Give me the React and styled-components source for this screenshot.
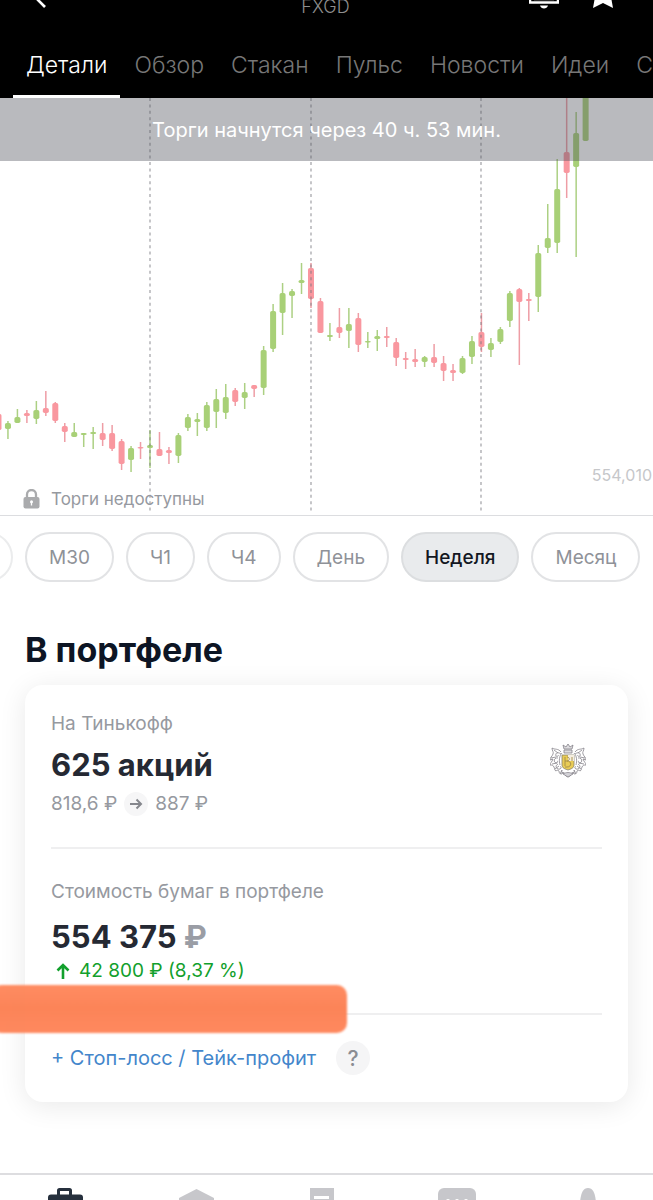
import React from "react";
import styled, { createGlobalStyle } from "styled-components";

const GlobalStyle = createGlobalStyle`
  * { box-sizing: border-box; }
  body {
    margin: 0;
    background: #fff;
    font-family: Inter, "Liberation Sans", sans-serif;
    color: #252933;
  }
  button { font: inherit; cursor: pointer; }
`;

const Page = styled.div`
  position: relative;
  display: flex;
  flex-direction: column;
  min-height: 100vh;
  overflow: hidden;
`;

const Header = styled.header`
  background: #000;
`;

const TitleBar = styled.div`
  display: grid;
  grid-template-columns: 1fr auto 1fr;
  height: 14px;
  padding: 0 38px 0 36px;
`;

const Title = styled.h1`
  margin: 0;
  font-size: 18px;
  font-weight: 300;
  line-height: 14px;
  color: #8e8e8e;
`;

const Actions = styled.div`
  display: flex;
  justify-content: flex-end;
  gap: 32px;
`;

const IconButton = styled.button`
  display: flex;
  justify-self: start;
  align-items: flex-start;
  padding: 0;
  border: 0;
  background: none;
`;

const Tabs = styled.nav`
  display: flex;
  gap: 1px;
  height: 84px;
  padding: 0 13px;
  overflow: hidden;
`;

const Tab = styled.a`
  flex: none;
  padding: 35px 13px 0;
  border-bottom: 3px solid ${(p) => (p.$active ? "#fff" : "transparent")};
  font-size: 23px;
  font-weight: 300;
  line-height: 32px;
  text-decoration: none;
  color: ${(p) => (p.$active ? "#fff" : "#777")};
`;

const ChartPanel = styled.section`
  position: relative;
  height: 418px;
  border-bottom: 1px solid #dcdde0;
`;

const ChartSvg = styled.svg`
  display: block;
  width: 100%;
  height: 417px;
`;

const Banner = styled.div`
  position: absolute;
  top: 0;
  left: 0;
  right: 0;
  padding: 17px 16px 15px;
  font-size: 20px;
  line-height: 31px;
  text-align: center;
  color: #fff;
  background: rgba(80, 82, 92, 0.4);
`;

const Unavailable = styled.div`
  position: absolute;
  left: 23px;
  bottom: 4px;
  display: flex;
  align-items: center;
  gap: 11px;
  font-size: 17px;
  line-height: 24px;
  color: #9699a0;
`;

const PriceLabel = styled.div`
  position: absolute;
  right: 1px;
  bottom: 28px;
  font-size: 16px;
  line-height: 24px;
  color: #c6c7ca;
`;

const Intervals = styled.div`
  display: flex;
  gap: 12px;
  padding: 16px 0 0;
  overflow: hidden;
`;

const Chip = styled.button`
  flex: none;
  height: 50px;
  padding: 0 22px;
  border: 2px solid ${(p) => (p.$active ? "#dcdee0" : "#e2e3e5")};
  border-radius: 25px;
  background: ${(p) => (p.$active ? "#e9ebed" : "#fff")};
  font-size: 19px;
  font-weight: ${(p) => (p.$active ? 500 : 400)};
  color: ${(p) => (p.$active ? "#131722" : "#8f9298")};
`;

const EdgeChip = styled(Chip)`
  width: 60px;
  margin-left: -47px;
  border-color: #ebeced;
`;

const Portfolio = styled.main`
  flex: 1;
  padding: 46px 25px 0;
`;

const SectionTitle = styled.h2`
  margin: 0 0 13px;
  font-size: 34px;
  font-weight: 700;
  line-height: 44px;
  color: #0d1524;
`;

const Card = styled.article`
  padding: 26px 26px 25px;
  border-radius: 18px;
  background: #fff;
  box-shadow: 0 4px 28px rgba(0, 0, 0, 0.09);
`;

const Holding = styled.div`
  display: flex;
  align-items: flex-start;
  justify-content: space-between;
  height: 138px;
  border-bottom: 2px solid #efeff0;
`;

const Worth = styled.div`
  height: 166px;
  padding-top: 30px;
  border-bottom: 2px solid #efeff0;
`;

const Caption = styled.div`
  font-size: 19px;
  line-height: 26px;
  color: #9699a0;
`;

const Amount = styled.div`
  margin-top: ${(p) => (p.$spaced ? "14px" : "10px")};
  font-size: 31px;
  font-weight: 700;
  line-height: 36px;
  span { color: #9a9da5; }
`;

const Prices = styled.div`
  display: flex;
  align-items: center;
  gap: 7px;
  margin-top: 9px;
  font-size: 19px;
  line-height: 24px;
  color: #9699a0;
`;

const Gain = styled.div`
  display: flex;
  align-items: center;
  gap: 9px;
  padding: 4px 0 0 5px;
  font-size: 19px;
  line-height: 24px;
  color: #12a02c;
`;

const CrestSlot = styled.div`
  padding: 33px 16px 0 0;
`;

const Orders = styled.div`
  display: flex;
  align-items: center;
  gap: 20px;
  height: 62px;
  padding-top: 24px;
`;

const OrderLink = styled.a`
  font-size: 20px;
  line-height: 28px;
  text-decoration: none;
  color: #4386cb;
`;

const HelpButton = styled.button`
  width: 34px;
  height: 34px;
  padding: 0;
  border: 0;
  border-radius: 50%;
  background: #f5f5f6;
  font-size: 21px;
  font-weight: 500;
  color: #8b8d93;
`;

const Marker = styled.div`
  position: absolute;
  top: 985px;
  left: -8px;
  width: 355px;
  height: 48px;
  border-radius: 10px;
  background: linear-gradient(#ff8a5f, #fc8255 48%, #ff875c);
  opacity: 0.98;
  filter: blur(1px);
`;

const BottomNav = styled.nav`
  display: flex;
  height: 27px;
  border-top: 2px solid #dddde0;
  background: #fff;
`;

const NavLink = styled.a`
  flex: 1;
  display: flex;
  justify-content: center;
  padding-top: 13px;
  overflow: hidden;
`;

const tabs = ["Детали", "Обзор", "Стакан", "Пульс", "Новости", "Идеи", "События"];
const intervals = ["М30", "Ч1", "Ч4", "День", "Неделя", "Месяц"];

// Each candle: direction, high, body top, body bottom, low.
const candles = [
  ["d", 413, 414, 430, 431], ["u", 421, 423, 429, 439], ["u", 409, 417, 423, 423],
  ["d", 410, 413, 416, 423], ["u", 401, 410, 419, 424], ["d", 391, 408, 413, 416],
  ["d", 402, 403, 421, 423], ["d", 423, 426, 432, 442], ["u", 423, 432, 437, 437],
  ["u", 433, 433, 435, 447], ["u", 427, 432, 434, 449], ["d", 423, 433, 440, 446],
  ["d", 425, 433, 449, 451], ["d", 439, 441, 464, 470], ["u", 446, 448, 460, 472],
  ["d", 442, 447, 448, 459], ["u", 430, 445, 448, 468], ["d", 432, 449, 456, 456],
  ["d", 447, 450, 453, 464], ["u", 433, 435, 456, 463], ["u", 414, 417, 428, 431],
  ["u", 413, 419, 422, 436], ["u", 402, 405, 428, 431], ["u", 389, 399, 412, 428],
  ["u", 384, 397, 413, 419], ["d", 388, 390, 402, 406], ["u", 383, 392, 398, 409],
  ["d", 385, 385, 389, 397], ["u", 346, 350, 388, 395], ["u", 304, 311, 349, 352],
  ["u", 283, 293, 313, 335], ["u", 289, 291, 296, 318], ["u", 263, 280, 283, 294],
  ["d", 263, 268, 299, 308], ["d", 298, 301, 333, 333], ["u", 323, 335, 337, 341],
  ["d", 308, 327, 333, 338], ["u", 308, 324, 331, 348], ["d", 313, 318, 345, 352],
  ["u", 332, 341, 342, 348], ["u", 330, 336, 339, 351], ["d", 327, 336, 338, 347],
  ["d", 338, 342, 358, 366], ["d", 352, 358, 360, 369], ["d", 349, 359, 362, 367],
  ["u", 356, 357, 362, 367], ["d", 344, 357, 363, 367], ["d", 356, 363, 371, 381],
  ["d", 364, 370, 373, 381], ["u", 356, 358, 373, 374], ["u", 336, 341, 357, 364],
  ["d", 313, 332, 347, 352], ["u", 338, 343, 350, 357], ["u", 327, 329, 342, 344],
  ["u", 291, 293, 321, 327], ["d", 288, 289, 302, 365], ["d", 293, 299, 301, 321],
  ["u", 245, 253, 297, 312], ["u", 204, 238, 248, 253], ["u", 159, 189, 243, 253],
  ["d", 90, 152, 173, 198], ["u", 112, 133, 167, 257], ["u", 90, 92, 141, 141],
];

function Chart() {
  return (
    <ChartSvg viewBox="0 98 653 417" preserveAspectRatio="xMidYMid slice" aria-label="FXGD">
      {candles.map(([dir, high, top, bottom, low], i) => {
        const x = 150 + (i - 16) * 9.47;
        const wick = dir === "u" ? "#acd083" : "#ee9da5";
        const body = dir === "u" ? "#a8d077" : "#f9979f";
        return (
          <g key={i}>
            <line x1={x} x2={x} y1={high} y2={low} stroke={wick} strokeWidth="1.5" />
            <rect x={x - 3} y={top} width="6" height={Math.max(bottom - top, 1.5)} rx="1.8" fill={body} />
          </g>
        );
      })}
      {[150, 311, 481].map((x) => (
        <line key={x} x1={x} x2={x} y1="98" y2="514" stroke="#77777f" strokeOpacity="0.7" strokeWidth="1.2" strokeDasharray="3 3.4" />
      ))}
    </ChartSvg>
  );
}

function Lock() {
  return (
    <svg width="17" height="20" viewBox="0 0 17 20" fill="none" aria-hidden="true">
      <path d="M4 9V5.500a4.500 4.500 0 0 1 9 0V9" stroke="#aaabad" strokeWidth="2.300" />
      <rect x="0.500" y="8" width="16" height="11.500" rx="2" fill="#aaabad" />
      <circle cx="8.500" cy="12.800" r="1.500" fill="#fff" />
      <path d="M8.500 13v3.500" stroke="#fff" strokeWidth="1.300" />
    </svg>
  );
}

function Crest() {
  const half = (
    <g fill="none" stroke="#85838a" strokeWidth="0.800">
      <path d="M11 8C8 4 5 6 2 4c0 3 2 4 1 6-1 3-3 3-3 6l3-1c-1 3-3 4-3 6 2 0 3 0 4 2s0 3 2 4c1-1 2-1 3 0 0 2 1 3 3 3l1-2c1 2 2 4 5 5" />
      <path d="M11 10C7 7 5 10 6 12c1 1 3 0 2-1M8 14c-4-1-5 4-2 5 2 0 2-2 1-2M8 20c-4 2-1 6 2 5 2-1 1-3 0-2M12 26c-1 3 1 4 3 3" />
      <path d="M4 6l4 3M1 14l5-1M2 20l5-1M5 25l4-3M10 30l2-4M12 9c-3 3-3 8-2 12" />
    </g>
  );
  return (
    <svg width="36" height="34" viewBox="0 0 36 34" aria-label="Тинькофф">
      {half}
      <g transform="translate(36 0) scale(-1 1)">{half}</g>
      <path d="M12 11h12v10c0 3-3 4-6 5-3-1-6-2-6-5z" fill="#e9cc55" stroke="#85806c" strokeWidth="0.800" />
      <path d="M18 11h6v6h-6z" fill="#f5eee0" />
      <path d="M15 13v9M17 13c3 0 3 4 0 4h-2m2 0c5 0 5 6 0 6h-2m7-10v4" fill="none" stroke="#a08a48" strokeWidth="0.900" />
      <path d="M14 5l-1-4 3 2 2-3 2 3 3-2-1 4zM14 6h8v3h-8z" fill="#dedde0" stroke="#85838a" strokeWidth="0.800" />
      <path d="M13 30c3-2 7-2 10 0l-5 3z" fill="#d3d2d7" stroke="#85838a" strokeWidth="0.700" />
    </svg>
  );
}

const navIcons = [
  {
    label: "Портфель",
    art: (
      <g fill="#26303d">
        <path d="M9 7V2.500Q9 0 11.500 0h10Q24 0 24 2.500V7h-3V3h-9v4z" />
        <rect x="0" y="6.500" width="35" height="24" rx="3" />
      </g>
    ),
  },
  { label: "Обзор", art: <path d="M18.500 1 36 10v17l-17.500 8L1 27V10z" fill="#c7c7cb" /> },
  {
    label: "Документы",
    art: (
      <g>
        <path d="M1 0h24v32H1z" fill="#c7c7cb" />
        <path d="M5 8h15v3H5z" fill="#fff" />
      </g>
    ),
  },
  {
    label: "Чат",
    art: (
      <g>
        <rect x="-2" y="0" width="38" height="30" rx="6" fill="#c7c7cb" />
        <g fill="#fff">
          <circle cx="8" cy="13" r="2" />
          <circle cx="17" cy="13" r="2" />
          <circle cx="26" cy="13" r="2" />
        </g>
      </g>
    ),
  },
  { label: "Ещё", art: <path d="M10 14C11 5 13 0 18 0s7 5 8 14z" fill="#c7c7cb" /> },
];

export default function App() {
  return (
    <>
      <GlobalStyle />
      <Page>
        <Header>
          <TitleBar>
            <IconButton aria-label="Назад">
              <svg width="12" height="10" viewBox="0 0 12 10">
                <path d="M0-2 9 7" stroke="#fff" strokeWidth="2.600" />
              </svg>
            </IconButton>
            <Title>FXGD</Title>
            <Actions>
              <IconButton aria-label="Уведомления">
                <svg width="30" height="10" viewBox="0 0 30 10">
                  <path d="M4-2v2M26-2v2" fill="none" stroke="#fff" strokeWidth="2" />
                  <path d="M5 0h20" stroke="#555" strokeWidth="1" />
                  <path d="M1 0v2.500h28V0" fill="none" stroke="#fff" strokeWidth="2.500" />
                  <path d="M11 5.500h8c-1 4-7 4-8 0z" fill="#fff" />
                </svg>
              </IconButton>
              <IconButton aria-label="В избранное">
                <svg width="24" height="10" viewBox="0 0 24 10">
                  <path d="M4-3h16l2 11-10-5-10 5z" fill="#fff" />
                </svg>
              </IconButton>
            </Actions>
          </TitleBar>
          <Tabs>
            {tabs.map((t, i) => (
              <Tab key={t} href="#" $active={i === 0}>{t}</Tab>
            ))}
          </Tabs>
        </Header>

        <ChartPanel>
          <Chart />
          <Banner>Торги начнутся через 40 ч. 53 мин.</Banner>
          <PriceLabel>554,010</PriceLabel>
          <Unavailable><Lock />Торги недоступны</Unavailable>
        </ChartPanel>

        <Intervals>
          <EdgeChip aria-label="Предыдущий интервал" />
          {intervals.map((t) => (
            <Chip key={t} $active={t === "Неделя"}>{t}</Chip>
          ))}
        </Intervals>

        <Portfolio>
          <SectionTitle>В портфеле</SectionTitle>
          <Card>
            <Holding>
              <div>
                <Caption>На Тинькофф</Caption>
                <Amount>625 акций</Amount>
                <Prices>
                  818,6 ₽
                  <svg width="24" height="24" viewBox="0 0 24 24" fill="none" aria-hidden="true">
                    <circle cx="12" cy="12" r="12" fill="#f6f6f7" />
                    <path d="M6 12h11M12.500 7.500 17 12l-4.500 4.500" stroke="#85878d" strokeWidth="2" />
                  </svg>
                  887 ₽
                </Prices>
              </div>
              <CrestSlot><Crest /></CrestSlot>
            </Holding>
            <Worth>
              <Caption>Стоимость бумаг в портфеле</Caption>
              <Amount $spaced>554 375 <span>₽</span></Amount>
              <Gain>
                <svg width="14" height="16" viewBox="0 0 14 16" fill="none" aria-hidden="true">
                  <path d="M7 16V2M1.500 7.500 7 2l5.500 5.500" stroke="#12a02c" strokeWidth="2.600" />
                </svg>
                42 800 ₽ (8,37 %)
              </Gain>
            </Worth>
            <Orders>
              <OrderLink href="#">+ Стоп-лосс / Тейк-профит</OrderLink>
              <HelpButton aria-label="Справка">?</HelpButton>
            </Orders>
          </Card>
        </Portfolio>

        <BottomNav>
          {navIcons.map(({ label, art }) => (
            <NavLink key={label} href="#" aria-label={label}>
              <svg width="35" height="35" viewBox="0 0 35 35" overflow="visible">{art}</svg>
            </NavLink>
          ))}
        </BottomNav>
        <Marker />
      </Page>
    </>
  );
}
